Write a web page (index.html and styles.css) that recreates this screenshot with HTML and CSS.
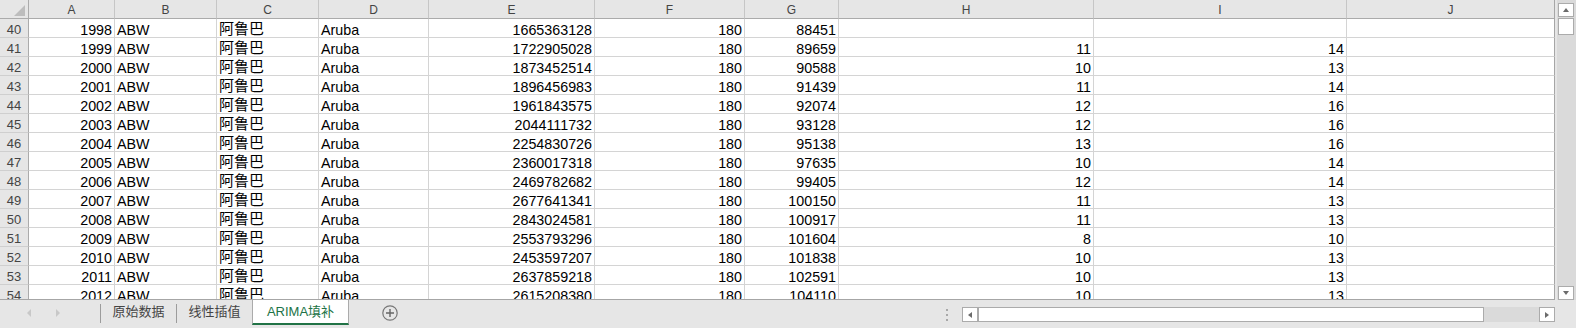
FILE: index.html
```html
<!DOCTYPE html>
<html lang="zh-CN">

<head>
	<meta charset="UTF-8">
	<title>ARIMA填补</title>
	<link rel="stylesheet" href="styles.css">
</head>

<body>
	<div class="sheet">
		<div class="grid" id="grid">
			<div class="row head">
				<div class="corner"><span class="corner-tri"></span></div>
				<div>A</div>
				<div>B</div>
				<div>C</div>
				<div>D</div>
				<div>E</div>
				<div>F</div>
				<div>G</div>
				<div>H</div>
				<div>I</div>
				<div>J</div>
			</div>
		</div>
		<div class="vscroll">
			<div class="sbtn"><span class="tri-up"></span></div>
			<div class="vthumb"></div>
			<div class="sbtn down"><span class="tri-down"></span></div>
		</div>
	</div>

	<div class="tabbar">
		<div class="nav">
			<span class="tri-left light"></span>
			<span class="tri-right light"></span>
		</div>
		<span class="sep"></span>
		<div class="tab">原始数据</div>
		<span class="sep"></span>
		<div class="tab">线性插值</div>
		<div class="tab active">ARIMA填补</div>
		<div class="add">
			<svg width="16" height="16" viewBox="0 0 16 16">
				<circle cx="8" cy="8" r="7.2" fill="none" stroke="#777" stroke-width="1.2" />
				<path d="M8 4v8M4 8h8" stroke="#666" stroke-width="1.4" />
			</svg>
		</div>
		<div class="hscroll">
			<div class="dots"></div>
			<div class="hbar">
				<div class="hbtn"><span class="tri-left"></span></div>
				<div class="hthumb"></div>
				<div class="htrack"></div>
				<div class="hbtn"><span class="tri-right"></span></div>
			</div>
		</div>
	</div>

	<script>
		document.addEventListener('DOMContentLoaded', function () {
			const rows = [
				[40, 1998, 1665363128, 88451, '', ''],
				[41, 1999, 1722905028, 89659, 11, 14],
				[42, 2000, 1873452514, 90588, 10, 13],
				[43, 2001, 1896456983, 91439, 11, 14],
				[44, 2002, 1961843575, 92074, 12, 16],
				[45, 2003, 2044111732, 93128, 12, 16],
				[46, 2004, 2254830726, 95138, 13, 16],
				[47, 2005, 2360017318, 97635, 10, 14],
				[48, 2006, 2469782682, 99405, 12, 14],
				[49, 2007, 2677641341, 100150, 11, 13],
				[50, 2008, 2843024581, 100917, 11, 13],
				[51, 2009, 2553793296, 101604, 8, 10],
				[52, 2010, 2453597207, 101838, 10, 13],
				[53, 2011, 2637859218, 102591, 10, 13],
				[54, 2012, 2615208380, 104110, 10, 13]
			];
			const grid = document.getElementById('grid');
			rows.forEach(r => {
				const row = document.createElement('div');
				row.className = 'row';
				row.innerHTML = `
					<div class="rh">${r[0]}</div>
					<div class="num">${r[1]}</div>
					<div>ABW</div>
					<div class="zh">阿鲁巴</div>
					<div>Aruba</div>
					<div class="num">${r[2]}</div>
					<div class="num">180</div>
					<div class="num">${r[3]}</div>
					<div class="num">${r[4]}</div>
					<div class="num">${r[5]}</div>
					<div></div>
				`;
				grid.appendChild(row);
			});
		});
	</script>
</body>

</html>
```

FILE: styles.css
```css
body {
	margin: 0;
	width: 1576px;
	height: 328px;
	overflow: hidden;
	background-color: #e6e6e6;
	font-family: 'Liberation Sans', 'Noto Sans CJK SC', sans-serif;
	color: #000;
}

/* sheet area */

.sheet {
	display: flex;
	height: 300px;
}

.grid {
	width: 1555px;
	height: 300px;
	box-sizing: border-box;
	overflow: hidden;
	background-color: #fff;
	border-bottom: 1px solid #a6a6a6;
}

.row {
	display: grid;
	grid-template-columns: 29px 86px 102px 102px 110px 166px 150px 94px 255px 253px 208px;
	height: 19px;
}

.row > div {
	box-sizing: border-box;
	height: 19px;
	padding: 4px 2px 0;
	border-right: 1px solid #d4d4d4;
	border-bottom: 1px solid #d4d4d4;
	font-size: 14.3px;
	line-height: 14px;
	white-space: nowrap;
	overflow: hidden;
}

.row > div:last-child {
	border-right-color: #a6a6a6;
}

.row .num {
	text-align: right;
}

.row .zh {
	padding-top: 3px;
	font-size: 15px;
}

.row .rh {
	padding: 4px 0 0;
	background-color: #e6e6e6;
	border-right-color: #ababab;
	border-bottom-color: #cfcfcf;
	color: #444;
	font-size: 13px;
	text-align: center;
}

.head > div {
	padding: 3px 0 0;
	background-color: #e6e6e6;
	border-right-color: #c6c6c6;
	border-bottom-color: #ababab;
	color: #444;
	font-size: 12px;
	line-height: 15px;
	text-align: center;
}

.head > .corner {
	display: flex;
	justify-content: flex-end;
	align-items: flex-end;
	padding: 0 3px 2px 0;
	border-right-color: #ababab;
}

.corner-tri {
	width: 11px;
	height: 11px;
	background-color: #bdbdbd;
	clip-path: polygon(100% 0, 100% 100%, 0 100%);
}

/* vertical scrollbar */

.vscroll {
	width: 21px;
	height: 300px;
	box-sizing: border-box;
	padding: 3px 3px 0;
	display: flex;
	flex-direction: column;
	background: linear-gradient(to right, #e6e6e6 2px, #dadada 2px);
}

.sbtn,
.hbtn {
	box-sizing: border-box;
	width: 16px;
	height: 14px;
	background-color: #fff;
	border: 1px solid #ababab;
	display: flex;
	align-items: center;
	justify-content: center;
}

.sbtn.down {
	margin-top: auto;
}

.vthumb {
	box-sizing: border-box;
	width: 16px;
	height: 17px;
	margin-top: 1px;
	background-color: #fff;
	border: 1px solid #ababab;
}

.tri-up,
.tri-down {
	width: 0;
	height: 0;
	border-left: 3px solid transparent;
	border-right: 3px solid transparent;
}

.tri-up {
	border-bottom: 4px solid #6b6b6b;
}

.tri-down {
	border-top: 4px solid #6b6b6b;
}

.tri-left,
.tri-right {
	width: 0;
	height: 0;
	border-top: 3px solid transparent;
	border-bottom: 3px solid transparent;
}

.tri-left {
	border-right: 4px solid #6b6b6b;
}

.tri-right {
	border-left: 4px solid #6b6b6b;
}

/* sheet tabs */

.tabbar {
	display: flex;
	align-items: flex-start;
	height: 28px;
}

.nav {
	width: 100px;
	height: 26px;
	box-sizing: border-box;
	padding-left: 27px;
	display: flex;
	align-items: center;
}

.nav .light {
	border-top-width: 4px;
	border-bottom-width: 4px;
}

.nav .tri-left.light {
	border-right-color: #c8c8c8;
}

.nav .tri-right.light {
	margin-left: 25px;
	border-left-color: #c8c8c8;
}

.sep {
	width: 1px;
	height: 19px;
	margin-top: 4px;
	background-color: #9c9c9c;
}

.tab {
	width: 75px;
	height: 23px;
	font-size: 13px;
	line-height: 23px;
	color: #444;
	text-align: center;
}

.tab.active {
	box-sizing: border-box;
	width: 97px;
	height: 25px;
	background-color: #fff;
	border-left: 1px solid #ababab;
	border-right: 1px solid #ababab;
	border-bottom: 2px solid #217346;
	color: #217346;
}

.add {
	margin: 5px 0 0 33px;
	height: 16px;
}

.add svg {
	display: block;
}

/* horizontal scrollbar */

.hscroll {
	margin-left: auto;
	padding-right: 21px;
	display: flex;
	align-items: flex-start;
}

.dots {
	width: 2px;
	height: 12px;
	margin-top: 9px;
	background: linear-gradient(to bottom, #a8a8a8 0 2px, transparent 2px 5px, #a8a8a8 5px 7px, transparent 7px 10px, #a8a8a8 10px 12px);
}

.hbar {
	display: flex;
	margin: 7px 0 0 14px;
	height: 15px;
}

.hbar .hbtn {
	height: 15px;
}

.hthumb {
	box-sizing: border-box;
	width: 506px;
	height: 15px;
	background-color: #fff;
	border: 1px solid #ababab;
}

.htrack {
	width: 55px;
	height: 15px;
	background-color: #dadada;
}
```
